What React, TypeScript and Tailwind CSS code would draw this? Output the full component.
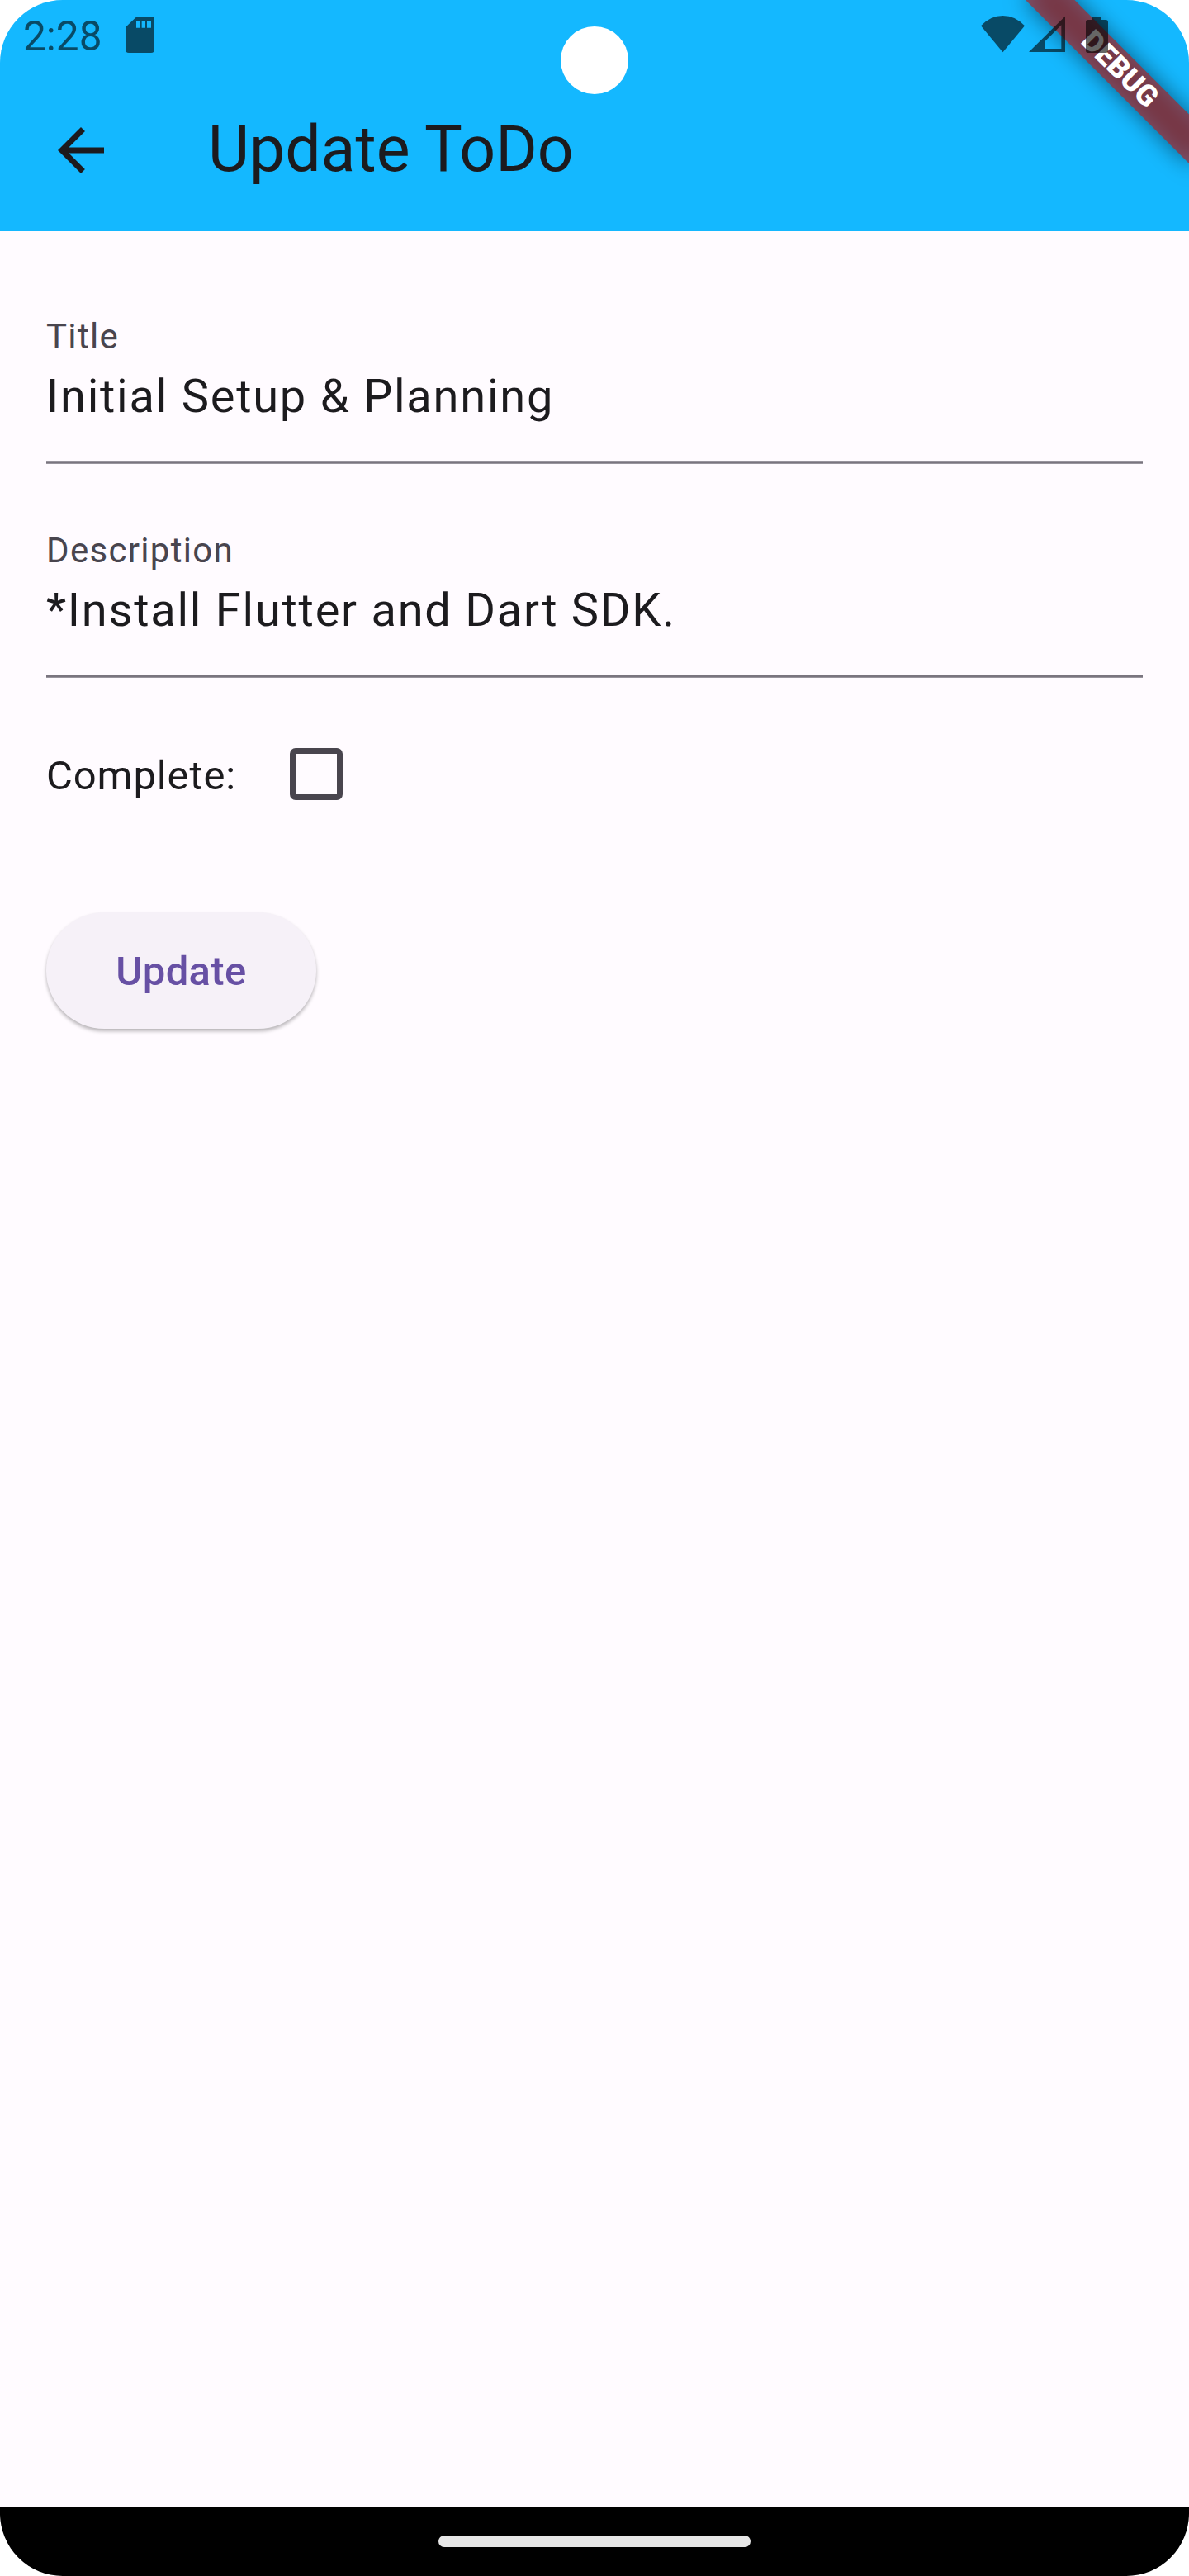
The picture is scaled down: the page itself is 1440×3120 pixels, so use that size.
import React from "react";

function StatusBar() {
  return (
    <div className="absolute inset-x-0 top-0 z-20 flex h-[84px] items-start justify-between pl-[28px] pr-[97px] text-black/60">
      <div className="flex items-start">
        <span className="mt-[15px] w-[124px] text-[49.5px] leading-[58px]">2:28</span>
        <svg className="mt-5 h-[44px] w-[35px]" viewBox="0 0 105 132" fill="currentColor">
          <path
            fillRule="evenodd"
            d="M41 0H93Q105 0 105 12V120Q105 132 93 132H12Q0 132 0 120V39ZM39 15V41H52V15ZM59 15V41H72V15ZM78 15V41H93V15Z"
          />
        </svg>
      </div>
      <div className="flex items-start">
        <svg className="mt-[19px] h-[45px] w-[53px]" viewBox="0 0 159 135" fill="currentColor">
          <path d="M0 37Q34 0 79.500 0T159 37L79.500 133Z" />
        </svg>
        <svg className="ml-[5px] mt-[19px] h-[45px] w-[44px]" viewBox="0 0 132 135" fill="currentColor">
          <path fillRule="evenodd" d="M132 2V132H0ZM118 34L58 94V120H118Z" />
        </svg>
        <svg className="ml-[25px] mt-[19px] h-[45px] w-[28px]" viewBox="0 0 84 135" fill="currentColor">
          <path d="M24 3H57V15H73Q81 15 81 23V127Q81 135 73 135H8Q0 135 0 127V23Q0 15 8 15H24Z" />
        </svg>
      </div>
    </div>
  );
}

function DebugBanner() {
  return (
    <div className="absolute left-full top-0 z-10 size-0 origin-top-left rotate-45">
      <div className="absolute -left-[140px] top-[98px] h-[42px] w-[280px] bg-black/50 blur-[13.9px]" />
      <div className="absolute -left-[140px] top-[98px] flex h-[42px] w-[280px] items-center justify-center bg-[#b71c1c]/[0.627] text-[35.7px] leading-none font-black text-white">
        DEBUG
      </div>
    </div>
  );
}

function Field({ label, value }: { label: string; value: string }) {
  return (
    <label className="flex h-[204px] flex-col">
      <span className="mt-[25px] text-[42px] leading-[50px] tracking-[1.3125px] text-[#49454e]">{label}</span>
      <span className="mt-[5px] text-[56px] leading-[84px] tracking-[1.75px] text-[#1c1b1e]">{value}</span>
      <span className="mt-auto h-1 w-full border-y border-[#98949d] bg-[#7a757f]" />
    </label>
  );
}

export default function App() {
  return (
    <div className="bg-white font-['Roboto',sans-serif]">
      <div className="relative flex h-[3120px] w-[1440px] flex-col overflow-hidden rounded-[76px] bg-[#fffbff]">
        <StatusBar />
        <DebugBanner />
        <div className="absolute left-[679px] top-8 z-30 size-[82px] rounded-full bg-white" />

        <header className="flex h-[280px] items-center bg-[#14b8ff] pl-[56px] pt-[84px] text-[#1c1b1e]">
          <svg className="size-[84px]" viewBox="0 0 24 24" fill="currentColor">
            <path d="M20 11H7.830l5.590-5.590L12 4l-8 8 8 8 1.410-1.410L7.830 13H20z" />
          </svg>
          <h1 className="ml-[112px] pb-0.5 text-[77px] leading-[98px]">Update ToDo</h1>
        </header>

        <main className="flex flex-1 flex-col items-start px-[56px] pt-[78px]">
          <div className="flex w-full flex-col gap-[55px]">
            <Field label="Title" value="Initial Setup &amp; Planning" />
            <Field label="Description" value="*Install Flutter and Dart SDK." />
          </div>
          <div className="mt-[85px] flex h-[63px] items-center">
            <span className="w-[295px] pt-[3px] text-[49px] leading-[63px] tracking-[0.875px] text-[#1c1b1e]">Complete:</span>
            <span className="size-[63.5px] rounded-[7px] border-[7px] border-[#49454e]" />
          </div>
          <button className="mt-[136px] flex h-[141px] w-[327px] items-center justify-center rounded-full bg-[#f6f1f8] pt-[3px] text-[49px] font-medium tracking-[0.35px] text-[#6750a4] shadow-[0_3px_4px_rgba(0,0,0,0.28)]">
            Update
          </button>
        </main>

        <footer className="flex h-[84px] items-center justify-center bg-black">
          <div className="h-[14px] w-[378px] rounded-full bg-[#e6e6e6]" />
        </footer>
      </div>
    </div>
  );
}
